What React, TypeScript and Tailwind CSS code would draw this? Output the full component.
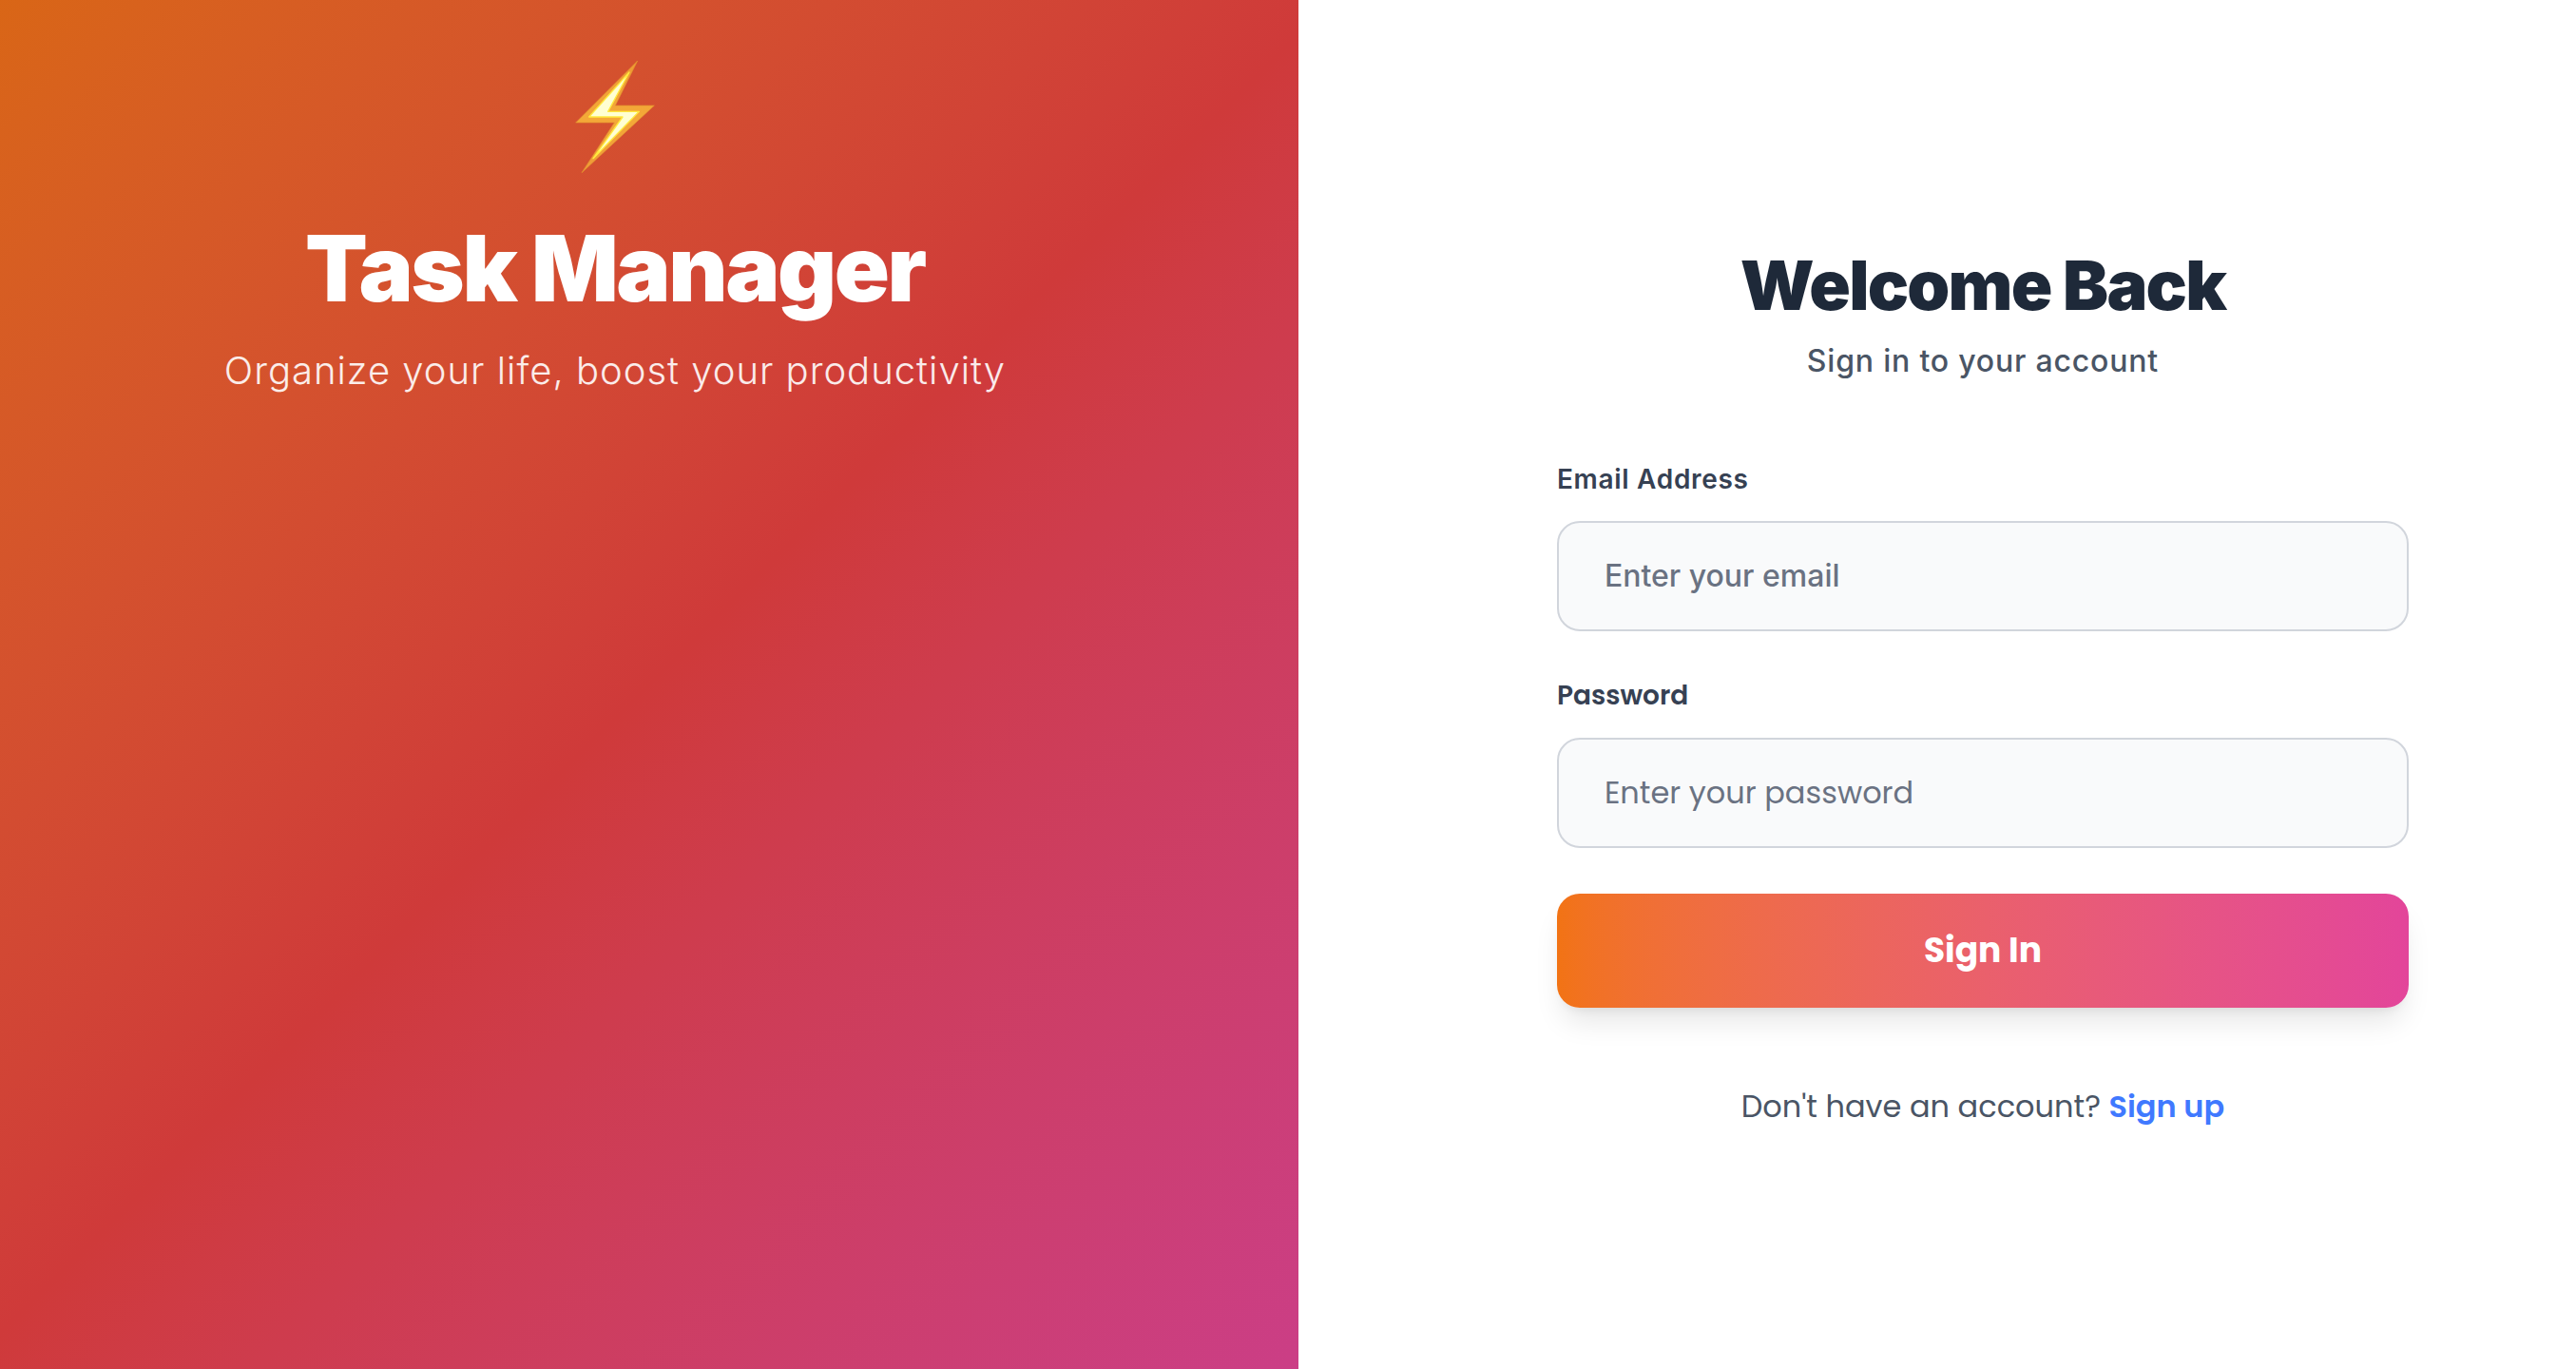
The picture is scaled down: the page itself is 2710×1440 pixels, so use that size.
import { useState } from "react";

function Bolt() {
  return (
    <svg viewBox="-11 0 420 480" className="h-40 w-[140px]" role="img" aria-label="Lightning bolt">
      <defs>
        <linearGradient id="bolt-edge" x1="0" y1="0" x2="0" y2="1">
          <stop offset="0" stopColor="#ee9a34" />
          <stop offset="0.5" stopColor="#f4a938" />
          <stop offset="1" stopColor="#ef9a38" />
        </linearGradient>
      </defs>
      <path
        d="M270 72 L200 213 H323 L94 425 L197 267 H75 Z"
        fill="url(#bolt-edge)"
        stroke="#e2922e"
        strokeWidth="2"
        strokeLinejoin="round"
      />
      <path
        d="M244 108 L177 232 H275 L130 380 L223 249 H117 Z"
        fill="#ffffd2"
        stroke="#ffea3c"
        strokeWidth="4"
        strokeLinejoin="round"
      />
    </svg>
  );
}

const geometric = "font-['Poppins','Inter',sans-serif]";
const field =
  "block w-full rounded-3xl border-2 border-[#d1d5dc] bg-[#f9fafb] px-12 py-8 text-[32px] leading-12 text-[#1e2939] placeholder:text-[#6a7282] focus:outline-none";

export default function App() {
  const [email, setEmail] = useState("");
  const [password, setPassword] = useState("");

  return (
    <div className="flex min-h-screen bg-white font-['Inter',sans-serif]">
      <section className="flex w-[50.4%] flex-col items-center bg-[linear-gradient(135deg_in_oklab,#d96616_0%,#cf3a3a_50%,#cb3e86_100%)] pt-10 pr-[72px] text-center text-white">
        <Bolt />
        <h1 className="mt-[34px] text-[96px] leading-[96px] font-black tracking-tight">Task Manager</h1>
        <p className="mt-8 text-[40px] leading-14 font-light tracking-wide text-white/90">
          Organize your life, boost your productivity
        </p>
      </section>

      <main className="flex flex-1 flex-col items-center justify-center pt-2 pl-24">
        <div className="w-full max-w-4xl">
          <header className="mb-20 text-center">
            <h2 className="text-[72px] leading-20 font-black tracking-tight text-[#1e2939]">Welcome Back</h2>
            <p className="mt-4 text-[32px] leading-12 font-medium tracking-wide text-[#4a5565]">
              Sign in to your account
            </p>
          </header>

          <form onSubmit={(e) => e.preventDefault()}>
            <label
              htmlFor="email"
              className="mb-6 block text-[28px] leading-10 font-semibold tracking-wide text-[#364153]"
            >
              Email Address
            </label>
            <input
              id="email"
              type="email"
              value={email}
              onChange={(e) => setEmail(e.target.value)}
              placeholder="Enter your email"
              className={`${field} font-medium`}
            />
            <label
              htmlFor="password"
              className={`${geometric} mt-12 mb-6 block text-[28px] leading-10 font-semibold text-[#364153]`}
            >
              Password
            </label>
            <input
              id="password"
              type="password"
              value={password}
              onChange={(e) => setPassword(e.target.value)}
              placeholder="Enter your password"
              className={`${field} ${geometric}`}
            />
            <button
              type="submit"
              className={`${geometric} mt-12 block w-full rounded-3xl bg-[linear-gradient(90deg_in_oklab,#f27314,#e3459a)] py-8 text-[36px] leading-14 font-bold text-white shadow-[0_20px_30px_-6px_rgba(0,0,0,0.1),0_8px_12px_-8px_rgba(0,0,0,0.1)]`}
            >
              Sign In
            </button>
          </form>

          <p className={`${geometric} mt-20 text-center text-[32px] leading-12 text-[#4a5565]`}>
            Don't have an account?{" "}
            <a href="#signup" className="font-semibold text-[#4079ff]">
              Sign up
            </a>
          </p>
        </div>
      </main>
    </div>
  );
}
